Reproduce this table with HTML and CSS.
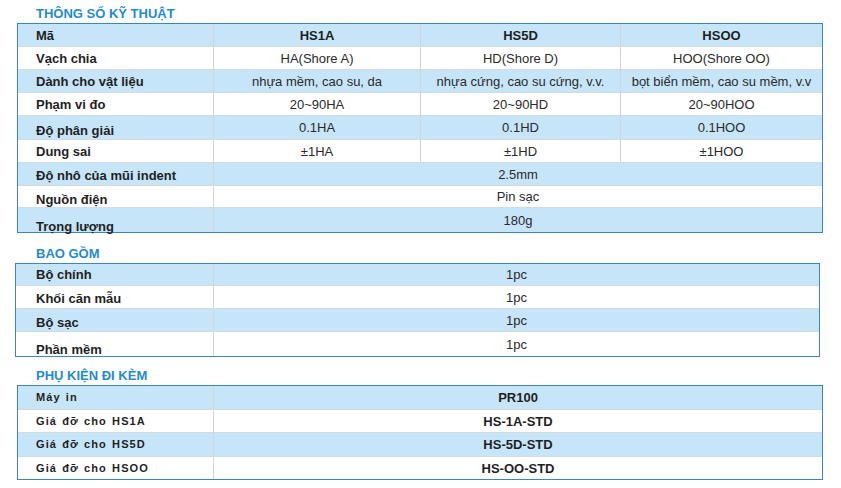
FILE: index.html
```html
<!DOCTYPE html>
<html lang="vi">
<head>
<meta charset="utf-8">
<title>Thông số kỹ thuật</title>
<link rel="stylesheet" href="styles.css">
</head>
<body>
<div class="page">
  <h2 class="title title-1">THÔNG SỐ KỸ THUẬT</h2>
  <table class="tbl tbl-specs">
    <colgroup><col class="c1"><col class="c2"><col class="c3"><col class="c4"></colgroup>
    <tr class="blue"><td class="lbl">Mã</td><td class="val b">HS1A</td><td class="val b">HS5D</td><td class="val b last">HSOO</td></tr>
    <tr><td class="lbl">Vạch chia</td><td class="val">HA(Shore A)</td><td class="val">HD(Shore D)</td><td class="val last">HOO(Shore OO)</td></tr>
    <tr class="blue"><td class="lbl">Dành cho vật liệu</td><td class="val">nhựa mềm, cao su, da</td><td class="val">nhựa cứng, cao su cứng, v.v.</td><td class="val last">bọt biển mềm, cao su mềm, v.v</td></tr>
    <tr><td class="lbl">Phạm vi đo</td><td class="val">20~90HA</td><td class="val">20~90HD</td><td class="val last">20~90HOO</td></tr>
    <tr class="blue tall"><td class="lbl dn3">Độ phân giải</td><td class="val">0.1HA</td><td class="val">0.1HD</td><td class="val last">0.1HOO</td></tr>
    <tr><td class="lbl">Dung sai</td><td class="val">±1HA</td><td class="val">±1HD</td><td class="val last">±1HOO</td></tr>
    <tr class="blue"><td class="lbl dn1">Độ nhô của mũi indent</td><td class="val last" colspan="3">2.5mm</td></tr>
    <tr class="short"><td class="lbl dn3">Nguồn điện</td><td class="val last" colspan="3">Pin sạc</td></tr>
    <tr class="blue tall end"><td class="lbl low-10">Trọng lượng</td><td class="val last" colspan="3">180g</td></tr>
  </table>

  <h2 class="title title-2">BAO GỒM</h2>
  <table class="tbl tbl-incl">
    <colgroup><col class="c1w"><col class="c2w"></colgroup>
    <tr class="blue short"><td class="lbl">Bộ chính</td><td class="val last">1pc</td></tr>
    <tr><td class="lbl dn1">Khối căn mẫu</td><td class="val last">1pc</td></tr>
    <tr class="blue"><td class="lbl low-16">Bộ sạc</td><td class="val last">1pc</td></tr>
    <tr class="tall end"><td class="lbl low-12">Phần mềm</td><td class="val last">1pc</td></tr>
  </table>

  <h2 class="title title-3">PHỤ KIỆN ĐI KÈM</h2>
  <table class="tbl tbl-acc">
    <colgroup><col class="c1"><col class="c2w"></colgroup>
    <tr class="blue tall"><td class="lbl sm">Máy in</td><td class="val b last">PR100</td></tr>
    <tr><td class="lbl sm">Giá đỡ cho HS1A</td><td class="val b last">HS-1A-STD</td></tr>
    <tr class="blue tall"><td class="lbl sm">Giá đỡ cho HS5D</td><td class="val b last">HS-5D-STD</td></tr>
    <tr class="short end"><td class="lbl sm">Giá đỡ cho HSOO</td><td class="val b last">HS-OO-STD</td></tr>
  </table>
</div>
</body>
</html>
```

FILE: styles.css
```css
html, body {
  margin: 0;
  padding: 0;
  background: #ffffff;
}

body {
  font-family: "Liberation Sans", Arial, sans-serif;
  color: #222222;
}

.page {
  width: 841px;
}

.title {
  margin: 0;
  padding-left: 36px;
  height: 16px;
  line-height: 16px;
  font-size: 13px;
  font-weight: bold;
  color: #1f8bd2;
}

.title-1 { margin-top: 6px; margin-bottom: 1px; }
.title-2 { margin-top: 13px; margin-bottom: 1px; }
.title-3 { margin-top: 11px; margin-bottom: 1px; }

.tbl {
  border-collapse: separate;
  border-spacing: 0;
  table-layout: fixed;
  border: 1px solid #3b87bc;
  font-size: 13px;
}

.tbl-specs { margin-left: 17px; width: 806px; }
.tbl-incl { margin-left: 15px; width: 805px; }
.tbl-acc { margin-left: 17px; width: 806px; }

.c1 { width: 196px; }
.c2 { width: 207px; }
.c3 { width: 200px; }
.c4 { width: 201px; }
.c1w { width: 198px; }
.c2w { width: auto; }

.tbl tr { height: 23px; }
.tbl tr.tall { height: 24px; }
.tbl tr.short { height: 22px; }
.tbl tr.blue td { background: #c7e5f8; }

.tbl td {
  padding: 0;
  line-height: 15px;
  vertical-align: middle;
  border-bottom: 1px solid #d3dbe1;
  border-right: 1px solid #d0d5da;
  white-space: nowrap;
  overflow: visible;
}

.tbl tr.end td { border-bottom: none; }
.tbl td.last { border-right: none; }

.lbl {
  padding-left: 18px !important;
  font-weight: bold;
  color: #1f1f1f;
}

.tbl-incl .lbl { padding-left: 20px !important; }

.val {
  text-align: center;
  color: #2a2a2a;
}

.b {
  font-weight: bold;
  color: #1f1f1f;
}

.sm {
  font-size: 11px;
  letter-spacing: 1.1px;
  word-spacing: 1px;
}

.dn1 { padding-top: 2px !important; }
.dn3 { padding-top: 6px !important; }

.low-10 { vertical-align: bottom !important; line-height: 10px !important; }
.low-12 { vertical-align: bottom !important; line-height: 12px !important; }
.low-16 { vertical-align: bottom !important; line-height: 16px !important; }
```
